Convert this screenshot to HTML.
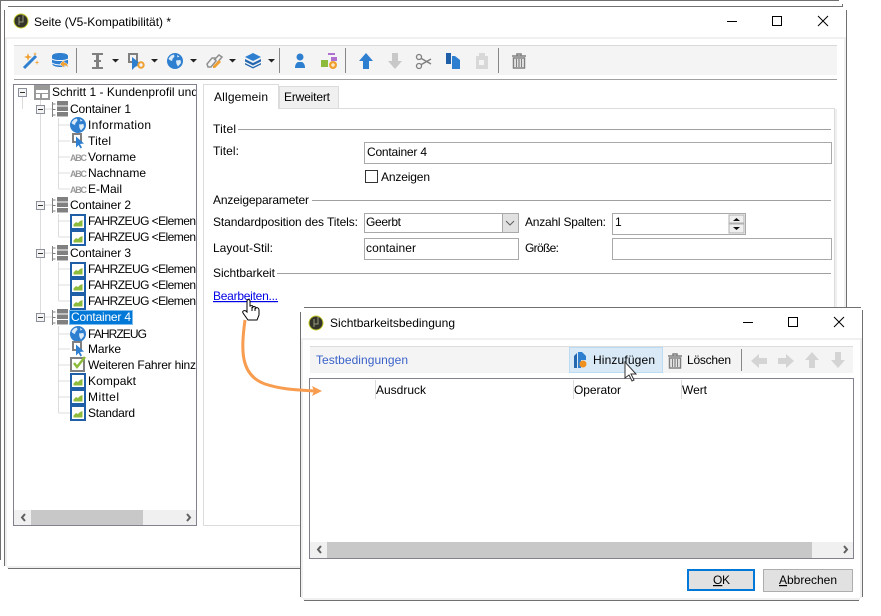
<!DOCTYPE html>
<html><head><meta charset="utf-8"><style>
html,body{margin:0;padding:0;background:#fff;width:881px;height:616px;overflow:hidden}
svg{display:block;font-family:"Liberation Sans",sans-serif;font-size:12px;fill:#000}
</style></head><body>
<svg width="881" height="616" viewBox="0 0 881 616" xmlns="http://www.w3.org/2000/svg">
<defs>
<clipPath id="tc"><rect x="14" y="85" width="182" height="425"/></clipPath>
<g id="globe"><circle cx="8" cy="8" r="8" fill="#2f7fd0"/><path d="M4 2.500l3-1 .5 2-2 2.500-.5 2-2.500-1-1-1.500zM9 7.500l4.500-.5 .5 3-3 3.500-1.500-2.500zM10 2l2.500 1.500-2 1z" fill="#dcebf8"/></g>
<g id="cur"><rect x="3" y="1" width="8" height="8" fill="none" stroke="#808080" stroke-width="2"/><path d="M6 3.500v11l2.500-2.500 2 3.500 1.500-1-2-3.500 4-.5z" fill="#2f7fd0"/></g>
<g id="img"><rect x="1" y="1" width="14" height="14" fill="#fff" stroke="#1f5fa8" stroke-width="2"/><path d="M3.500 12.500v-2l2.500-2.500 2 1 2-2 2.500-1v6.500z" fill="#8dbb3c"/></g>
<g id="cont"><path d="M.5 1v15M.5 3h3M.5 8.500h3M.5 14h3" stroke="#808080" fill="none"/><rect x="5" y="0" width="11" height="4.500" fill="#808080"/><rect x="5" y="5.500" width="11" height="4.500" fill="#808080"/><rect x="5" y="11" width="11" height="4.500" fill="#808080"/></g>
<g id="minus"><rect x=".5" y=".5" width="8" height="8" fill="#f4f4f4" stroke="#8a8f99"/><rect x="2" y="4" width="5" height="1" fill="#333"/></g>
<path id="drop" d="M0 0h7l-3.500 3.500z" fill="#222"/>
<path id="arr" d="M7 0l7 8h-4v8H4V8H0z"/>
<g id="trash"><path d="M0 3h14M5 3V1h4v2" stroke="#808080" stroke-width="1.500" fill="none"/><path d="M1.500 5h11v10h-11z" fill="none" stroke="#808080" stroke-width="1.500"/><path d="M4.500 6v8M7 6v8M9.500 6v8" stroke="#808080" stroke-width="1.300"/></g>
</defs>

<!-- back windows -->
<rect x="0" y="0" width="839" height="1" fill="#707070"/>
<rect x="8" y="6" width="834" height="1" fill="#707070"/><rect x="842" y="4" width="1" height="3" fill="#707070"/>
<rect x="0" y="0" width="1" height="560" fill="#707070"/>
<!-- main window -->
<rect x="4" y="10" width="1" height="556" fill="#707070"/>
<rect x="846" y="10" width="1" height="554" fill="#707070"/>
<rect x="8" y="568" width="838" height="1" fill="#707070"/>
<rect x="5" y="37" width="841" height="2" fill="#f0f0f0"/>
<rect x="5" y="39" width="2" height="527" fill="#f0f0f0"/><rect x="844" y="39" width="2" height="527" fill="#f0f0f0"/>
<rect x="7" y="566" width="838" height="2" fill="#f0f0f0"/>
<circle cx="21" cy="21" r="7" fill="#33332a" stroke="#c8cf30"/><path d="M19 25v-8M23 15v7h-4" stroke="#9a9a80" fill="none"/>
<text x="34" y="26" textLength="137">Seite (V5-Kompatibilität) *</text>
<rect x="727" y="21" width="10" height="1" fill="#000"/>
<rect x="772.500" y="16.500" width="9" height="9" fill="none" stroke="#000"/>
<path d="M818 16l10 10M828 16l-10 10" stroke="#000"/>

<!-- toolbar -->
<rect x="14" y="45" width="823" height="1" fill="#d9d9d9"/><rect x="14" y="46" width="823" height="29" fill="#f4f4f4"/>
<rect x="14" y="79" width="823" height="1" fill="#a0a0a0"/>
<rect x="76" y="48" width="1" height="25" fill="#888"/><rect x="279" y="48" width="1" height="25" fill="#888"/><rect x="345" y="48" width="1" height="25" fill="#888"/><rect x="498" y="48" width="1" height="25" fill="#888"/>
<path d="M24 68L36 56" stroke="#2f7fd0" stroke-width="3"/><path d="M28 53l1 3 3 1-3 1-1 3-1-3-3-1 3-1zM37 60l.5 2 2 .5-2 .5-.5 2-.5-2-2-.5 2-.5zM35 52l.5 1.500 1.500.5-1.500.5-.5 1.500-.5-1.500-1.500-.5 1.500-.5z" fill="#f0a030"/>
<path d="M52 56c0-4 16-4 16 0v7c0 3-4 4-8 4s-8-1-8-4z" fill="#2f7fd0"/><path d="M52 59c3 2 13 2 16 0M52 63c3 2 8 2 10 2" stroke="#fff" fill="none"/><path d="M60 64l4-4v2.500c3 0 4 2 4 5.500-1-2-2-2.500-4-2.500v2.500z" fill="#f0a030" stroke="#f4f4f4" stroke-width=".5"/>
<path d="M92 54h11M92 68h11M94 61h7" stroke="#808080" stroke-width="2" fill="none"/><rect x="96" y="54" width="3" height="14" fill="#808080"/>
<use href="#drop" x="112" y="59"/>
<rect x="129" y="54" width="8" height="8" fill="none" stroke="#808080" stroke-width="2"/><path d="M132 57v13l3-3 6-3z" fill="#2f7fd0"/><circle cx="141" cy="65" r="2.700" fill="#f4f4f4" stroke="#f0a030" stroke-width="2"/>
<use href="#drop" x="151" y="59"/>
<use href="#globe" x="167" y="53"/>
<use href="#drop" x="190" y="59"/>
<path d="M208 67l-1-3 5-6 3 0 1 3-5 6zM214 60l5-5 3 2-5 6" fill="none" stroke="#909090" stroke-width="1.500"/><path d="M213 66l6-6 2 2-6 6h-2z" fill="#f0a030"/>
<use href="#drop" x="229" y="59"/>
<path d="M253 53l8 4-8 4-8-4z" fill="#2f7fd0"/><path d="M245 59l8 4 8-4v2.500l-8 4-8-4zM245 63l8 4 8-4v1.500l-8 4-8-4z" fill="#2468b0"/>
<use href="#drop" x="268" y="59"/>
<circle cx="300" cy="57" r="3.500" fill="#2f7fd0"/><path d="M295 68c0-3 1-5 3-6h4c2 1 3 3 3 6z" fill="#2f7fd0"/>
<rect x="328" y="53" width="7" height="2" fill="#b070d0"/><rect x="331" y="57" width="6" height="4" fill="#b070d0"/><rect x="321" y="60" width="7" height="7" fill="#8dbb3c"/><circle cx="333" cy="65" r="4" fill="#f0a030"/><path d="M331 65h4M333 63v4" stroke="#fff"/>
<use href="#arr" x="359" y="53" fill="#2f7fd0"/>
<use href="#arr" transform="translate(402 69) rotate(180)" fill="#c8c8c8"/>
<path d="M417 56l14 8M417 67l14-8" stroke="#808080" stroke-width="1.500"/><circle cx="419" cy="57" r="2.500" fill="#f4f4f4" stroke="#808080" stroke-width="1.300"/><circle cx="419" cy="66" r="2.500" fill="#f4f4f4" stroke="#808080" stroke-width="1.300"/>
<rect x="446" y="53" width="5" height="11" fill="#1f5fa8"/><path d="M452 56h3l5 4v9h-8z" fill="#2f7fd0"/>
<path d="M476 56h3v-3h6v3h3v13h-12z" fill="#d8d8d8"/><rect x="479" y="60" width="5" height="5" fill="#f4f4f4"/>
<use href="#trash" x="512" y="53"/>

<!-- tree -->
<rect x="13.500" y="84.500" width="183" height="441" fill="#fff" stroke="#82828f"/>
<g stroke="#dcdcdc" fill="none">
<path d="M22.500 96V109M40.500 97V317M40.500 109H52M40.500 205H52M40.500 253H52M40.500 317H52"/>
<path d="M58.500 118V189M58.500 125H70M58.500 141H70M58.500 157H70M58.500 173H70M58.500 189H70"/>
<path d="M58.500 214V237M58.500 221H70M58.500 237H70"/>
<path d="M58.500 262V301M58.500 269H70M58.500 285H70M58.500 301H70"/>
<path d="M58.500 326V413M58.500 334H70M58.500 349H70M58.500 365H70M58.500 381H70M58.500 397H70M58.500 413H70"/>
</g>
<use href="#minus" x="18" y="88"/>
<rect x="34" y="85" width="16" height="15" fill="#999"/><rect x="36" y="90" width="12" height="3" fill="#fff"/><rect x="36" y="94" width="4" height="4" fill="#fff"/><rect x="42" y="94" width="6" height="4" fill="#fff"/>
<use href="#minus" x="36" y="105"/><use href="#cont" x="52" y="101"/>
<use href="#globe" x="70" y="117"/><use href="#cur" x="70" y="133"/>
<g font-size="9" font-weight="bold"><text x="70" y="161" textLength="17" style="fill:#999">ABC</text><text x="70" y="177" textLength="17" style="fill:#999">ABC</text><text x="70" y="193" textLength="17" style="fill:#999">ABC</text></g>
<use href="#minus" x="36" y="201"/><use href="#cont" x="52" y="197"/>
<use href="#img" x="70" y="214"/><use href="#img" x="70" y="230"/>
<use href="#minus" x="36" y="249"/><use href="#cont" x="52" y="245"/>
<use href="#img" x="70" y="262"/><use href="#img" x="70" y="278"/><use href="#img" x="70" y="294"/>
<use href="#minus" x="36" y="313"/><use href="#cont" x="52" y="309"/>
<use href="#globe" x="70" y="326"/><use href="#cur" x="70" y="341"/>
<rect x="71" y="358" width="13" height="13" fill="none" stroke="#808080" stroke-width="2"/><path d="M74 363l3 4 8-10" stroke="#8dbb3c" stroke-width="2.500" fill="none"/>
<use href="#img" x="70" y="373"/><use href="#img" x="70" y="389"/><use href="#img" x="70" y="405"/>
<rect x="69" y="310" width="64" height="15" fill="#0078d7"/><rect x="69.500" y="310.500" width="63" height="14" fill="none" stroke="#fff" stroke-dasharray="1 1"/>
<g clip-path="url(#tc)">
<text x="52" y="96" textLength="146">Schritt 1 - Kundenprofil und</text>
<text x="70" y="113" textLength="61">Container 1</text>
<text x="88" y="129" textLength="63">Information</text>
<text x="88" y="145" textLength="23">Titel</text>
<text x="88" y="161" textLength="48">Vorname</text>
<text x="88" y="177" textLength="58">Nachname</text>
<text x="88" y="193" textLength="34">E-Mail</text>
<text x="70" y="209" textLength="61">Container 2</text>
<text x="88" y="225" textLength="108">FAHRZEUG &lt;Elemen</text>
<text x="88" y="241" textLength="108">FAHRZEUG &lt;Elemen</text>
<text x="70" y="257" textLength="61">Container 3</text>
<text x="88" y="273" textLength="108">FAHRZEUG &lt;Elemen</text>
<text x="88" y="289" textLength="108">FAHRZEUG &lt;Elemen</text>
<text x="88" y="305" textLength="108">FAHRZEUG &lt;Elemen</text>
<text x="71" y="321" textLength="60" style="fill:#fff">Container 4</text>
<text x="88" y="338" textLength="59">FAHRZEUG</text>
<text x="88" y="353" textLength="33">Marke</text>
<text x="88" y="369" textLength="108">Weiteren Fahrer hinz</text>
<text x="88" y="385" textLength="48">Kompakt</text>
<text x="88" y="401" textLength="31">Mittel</text>
<text x="88" y="417" textLength="47">Standard</text>
</g>
<rect x="14" y="510" width="182" height="15" fill="#f0f0f0"/><rect x="31" y="510" width="112" height="15" fill="#c8c8c8"/>
<path d="M25 514l-3 3.500 3 3.500M187 514l3 3.500-3 3.500" fill="none" stroke="#606060" stroke-width="2"/>

<!-- tabs -->
<rect x="203.500" y="108.500" width="631" height="417" fill="#fff" stroke="#dcdcdc"/>
<rect x="835" y="109" width="2" height="417" fill="#efefef"/>
<rect x="279.500" y="86.500" width="59" height="22" fill="#f0f0f0" stroke="#dcdcdc"/>
<path d="M203.500 109V84.500H278.500V109" fill="#fff" stroke="#dcdcdc"/>
<text x="214" y="101" textLength="54">Allgemein</text>
<text x="284" y="101" textLength="46">Erweitert</text>

<!-- form -->
<text x="213" y="133" textLength="23">Titel</text><rect x="238" y="129" width="593" height="1" fill="#a0a0a0"/>
<text x="213" y="155" textLength="26">Titel:</text>
<rect x="364.500" y="142.500" width="467" height="21" fill="#fff" stroke="#a9a9ab"/><text x="367" y="156" textLength="60">Container 4</text>
<rect x="365.500" y="170.500" width="12" height="12" fill="#fff" stroke="#333"/><text x="381" y="181" textLength="49">Anzeigen</text>
<text x="213" y="204" textLength="96">Anzeigeparameter</text><rect x="312" y="200" width="519" height="1" fill="#a0a0a0"/>
<text x="213" y="226" textLength="145">Standardposition des Titels:</text>
<rect x="364.500" y="213.500" width="154" height="19" fill="#fff" stroke="#a9a9ab"/><rect x="502" y="214" width="16" height="18" fill="#e1e1e1"/><rect x="502" y="214" width="1" height="18" fill="#a9a9ab"/><path d="M506 221l4 4 4-4" fill="none" stroke="#606060"/>
<text x="366" y="226" textLength="35">Geerbt</text>
<text x="525" y="226" textLength="81">Anzahl Spalten:</text>
<rect x="612.500" y="213.500" width="133" height="21" fill="#fff" stroke="#a9a9ab"/><text x="615" y="226">1</text>
<rect x="729" y="215" width="15" height="8" fill="#efefef" stroke="#b0b0b0"/><rect x="729" y="224" width="15" height="9" fill="#efefef" stroke="#b0b0b0"/><path d="M733 221l3.500-3 3.500 3zM733 227l3.500 3 3.500-3z" fill="#111"/>
<text x="213" y="252" textLength="60">Layout-Stil:</text>
<rect x="364.500" y="238.500" width="154" height="21" fill="#fff" stroke="#a9a9ab"/><text x="366" y="252" textLength="50">container</text>
<text x="525" y="252" textLength="34">Größe:</text>
<rect x="612.500" y="238.500" width="219" height="21" fill="#fff" stroke="#a9a9ab"/>
<text x="213" y="277" textLength="62">Sichtbarkeit</text><rect x="277" y="273" width="554" height="1" fill="#a0a0a0"/>
<text x="213" y="300" textLength="65" style="fill:#0000e6" text-decoration="underline">Bearbeiten...</text>

<!-- dialog -->
<rect x="301" y="308" width="561" height="292" fill="#fff"/>
<rect x="304" y="307" width="557" height="1" fill="#707070"/>
<rect x="300" y="312" width="1" height="285" fill="#707070"/>
<rect x="862" y="310" width="1" height="287" fill="#707070"/>
<rect x="304" y="600" width="555" height="1" fill="#707070"/>
<rect x="301" y="338" width="561" height="2" fill="#f0f0f0"/>
<rect x="301" y="340" width="2" height="258" fill="#f0f0f0"/><rect x="860" y="340" width="2" height="258" fill="#f0f0f0"/>
<rect x="303" y="598" width="557" height="2" fill="#f0f0f0"/>
<circle cx="316" cy="323" r="7" fill="#33332a" stroke="#c8cf30"/><path d="M314 327v-8M318 317v7h-4" stroke="#9a9a80" fill="none"/>
<text x="330" y="327" textLength="125">Sichtbarkeitsbedingung</text>
<rect x="743" y="322" width="10" height="1" fill="#000"/>
<rect x="788.500" y="317.500" width="9" height="9" fill="none" stroke="#000"/>
<path d="M834 317l10 10M844 317l-10 10" stroke="#000"/>

<rect x="310" y="346" width="543" height="1" fill="#dcdcdc"/><rect x="310" y="347" width="543" height="26" fill="#f4f4f4"/>
<text x="316" y="364" textLength="92" style="fill:#3a62c8">Testbedingungen</text>
<rect x="569.500" y="347.500" width="93" height="25" fill="#d9e9f6" stroke="#bcdcf4"/>
<path d="M574 356l3-3v15h-3z" fill="#2468b0"/><path d="M578 352h4l4 4v4h-8z" fill="#2f7fd0"/><rect x="578" y="360" width="3" height="8" fill="#2f7fd0"/><circle cx="583" cy="364" r="3.500" fill="#f0901e"/>
<text x="593" y="364" textLength="62">Hinzufügen</text>
<use href="#trash" x="668" y="353"/>
<text x="687" y="364" textLength="44">Löschen</text>
<rect x="741" y="349" width="1" height="22" fill="#888"/>
<use href="#arr" transform="translate(751 368) rotate(-90)" fill="#d4d4d4"/>
<use href="#arr" transform="translate(794 354) rotate(90)" fill="#d4d4d4"/>
<use href="#arr" x="805" y="352" fill="#d4d4d4"/>
<use href="#arr" transform="translate(845 368) rotate(180)" fill="#d4d4d4"/>

<rect x="309.500" y="378.500" width="544" height="180" fill="#fff" stroke="#82828f"/>
<rect x="375" y="380" width="1" height="19" fill="#dcdcdc"/><rect x="573" y="380" width="1" height="19" fill="#dcdcdc"/><rect x="681" y="380" width="1" height="19" fill="#dcdcdc"/>
<text x="376" y="394" textLength="50">Ausdruck</text><text x="574" y="394" textLength="47">Operator</text><text x="682" y="394" textLength="25">Wert</text>
<rect x="310" y="542" width="543" height="16" fill="#f0f0f0"/><rect x="327" y="542" width="485" height="16" fill="#c8c8c8"/>
<path d="M321 546l-3 3.500 3 3.500M844 546l3 3.500-3 3.500" fill="none" stroke="#606060" stroke-width="2"/>

<rect x="688" y="570" width="66" height="20" fill="#e1e1e1" stroke="#0078d7" stroke-width="2"/>
<text x="713" y="584" text-decoration="underline">O</text><text x="722" y="584">K</text>
<rect x="763.500" y="569.500" width="89" height="22" fill="#e1e1e1" stroke="#adadad"/>
<text x="779" y="584" textLength="58"><tspan text-decoration="underline">A</tspan>bbrechen</text>

<!-- arrow + cursors -->
<path d="M245 320C241 350 240 375 265 384C280 389 295 390 315 391" fill="none" stroke="#f89c4f" stroke-width="3"/>
<path d="M322 391l-10-5 2 5-2 5z" fill="#f89c4f"/>
<path transform="translate(-1 -6)" d="M248 307c0-2 3-2 3 0v5c2-1 3 0 3 1 1-1 3 0 3 1 1-1 3 0 3 2v5l-2 5h-9l-5-7c-1-2 1-3 3-2l1 1z" fill="#fff" stroke="#000"/>
<path transform="translate(-1 -6)" d="M253 313v4M256 314v3" stroke="#000"/>
<path d="M625 362v16l4-3 3 6 2-1-3-6h5z" fill="#fff" stroke="#333"/>
</svg>
</body></html>
